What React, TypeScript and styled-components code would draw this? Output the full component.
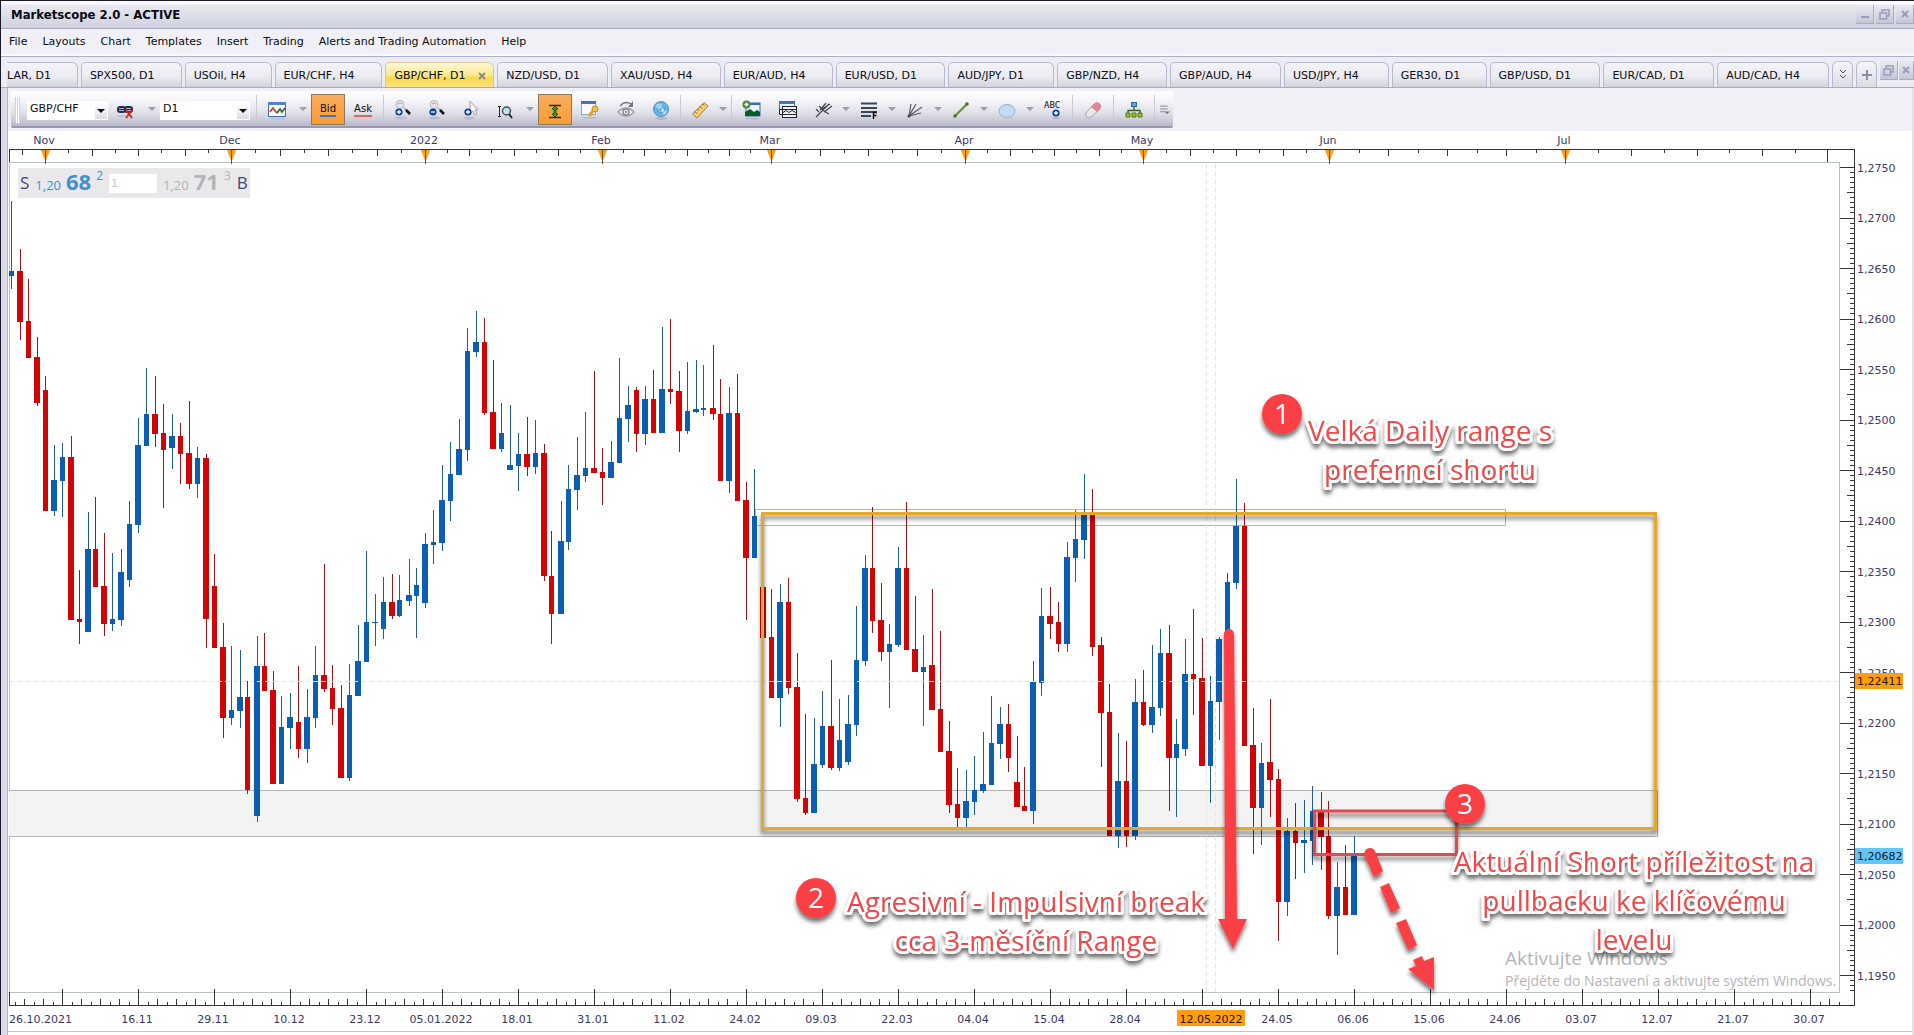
import React from "react";
import styled, { createGlobalStyle, css } from "styled-components";

const UI_FONT = '"DejaVu Sans", Verdana, sans-serif';
const NOTE_FONT = '"Open Sans", "Noto Sans", sans-serif';

const GlobalStyle = createGlobalStyle`
  *, *::before, *::after { box-sizing: border-box; }
  body { margin: 0; background: #efeff6; font: 11px/16px ${UI_FONT}; color: #0b0b12; }
  button, input, select { font: inherit; color: inherit; }
`;

/* ---------- window frame ---------- */

const Window = styled.div`
  min-height: 100vh;
  display: flex;
  flex-direction: column;
  background: #efeff6;
  border-top: 1px solid #1d1a2e;
  border-left: 1px solid #1d1a2e;
`;

const TitleBar = styled.header`
  display: flex;
  align-items: center;
  justify-content: space-between;
  height: 28px;
  padding-left: 10px;
  background: linear-gradient(#fbfbfe 0, #fbfbfe 3px, #e8e9f1 4px, #cfd1df 100%);
  border-bottom: 1px solid #a6a6bf;
`;

const Title = styled.h1`
  margin: 0;
  font: bold 13px/16px "DejaVu Sans Condensed", "DejaVu Sans", sans-serif;
  font-stretch: condensed;
`;

const FrameButtons = styled.div`
  display: flex;
  gap: 2px;
  align-items: flex-start;
`;

const FrameButton = styled.button<{ $w?: number }>`
  width: ${(p) => p.$w ?? 18}px;
  height: 19px;
  padding: 0;
  display: grid;
  place-items: center;
  border: 0;
  border-right: 1px solid #a9abc2;
  border-bottom: 1px solid #a9abc2;
  background: linear-gradient(#e9eaf3, #c5c7d8);
`;

const MenuBar = styled.nav`
  display: flex;
  gap: 15px;
  align-items: center;
  height: 28px;
  padding-left: 8px;
  padding-bottom: 2px;
  background: #f0f0f6;
  border-bottom: 1px solid #aeaec6;
  box-shadow: inset 0 -2px 0 #fafafd;
`;

const MenuItem = styled.button`
  padding: 0;
  border: 0;
  background: none;
  white-space: nowrap;
`;

/* ---------- tabs ---------- */

const TabStrip = styled.div`
  display: flex;
  align-items: flex-end;
  gap: 3px;
  height: 31px;
  padding-left: 6px;
  background: #ececf4;
  border-bottom: 1px solid #a9a9c4;
  overflow: hidden;
`;

const Tab = styled.div<{ $w: number; $active?: boolean; $first?: boolean }>`
  flex: 0 1 ${(p) => p.$w}px;
  min-width: 0;
  height: 25px;
  display: flex;
  align-items: center;
  justify-content: space-between;
  padding: 2px 6px 0 ${(p) => (p.$first ? 0 : 8)}px;
  border: 1px solid #b9b9cd;
  border-bottom: 0;
  border-left-width: ${(p) => (p.$first ? 0 : 1)}px;
  border-radius: ${(p) => (p.$first ? 0 : 5)}px 6px 0 0;
  background: linear-gradient(#f3f3f8 0, #ebebf2 55%, #d3d3df 100%);
  white-space: nowrap;
  ${(p) =>
    p.$active &&
    css`
      border-color: #d9c98b;
      background: linear-gradient(#fdf7d8 0, #fbe98f 50%, #f8d84c 62%, #fbe480 100%);
    `}
`;

const TabLabel = styled.button`
  padding: 0;
  border: 0;
  background: none;
`;

const TabClose = styled.button`
  width: 10px;
  height: 10px;
  padding: 0;
  border: 0;
  background: none;
  display: grid;
  place-items: center;
`;

const StripButton = styled.button`
  flex: 0 0 21px;
  height: 26px;
  padding: 0;
  display: grid;
  place-items: center;
  border: 1px solid #b9b9cd;
  border-bottom: 0;
  border-radius: 6px 6px 0 0;
  background: linear-gradient(#f5f5fa, #dcdce6);
`;

const StripFrame = styled(FrameButtons)`
  margin-left: auto;
  height: 26px;
  gap: 1px;
`;

/* ---------- toolbar ---------- */

const Body = styled.main`
  flex: 1;
  display: flex;
  flex-direction: column;
  padding-left: 6px;
  background: #dcdce8;
`;

const Sheet = styled.div`
  flex: 1;
  border-left: 1px solid #b6b6c8;
  border-right: 2px solid #e3e3ec;
  background: #ffffff;
`;

const ToolbarRow = styled.div`
  display: flex;
  height: 43px;
  padding: 3px 0 0 3px;
  background: #f0f0f6;
`;

const Toolbar = styled.div`
  display: flex;
  align-items: center;
  height: 37px;
  padding: 2px 0 0 4px;
  background: linear-gradient(#ffffff 0, #f6f6fa 25%, #dedee7 65%, #b9b9ca 100%);
  border-bottom: 2px solid #9797b0;
  border-radius: 2px;
`;

const Grip = styled.span`
  width: 5px;
  height: 26px;
  margin-right: 7px;
  background: repeating-linear-gradient(90deg, #d2d2de 0, #d2d2de 1px, #ffffff 1px, #ffffff 2px);
`;

const Field = styled.span<{ $w: number; $gap?: number }>`
  position: relative;
  width: ${(p) => p.$w}px;
  height: 19px;
  margin: 2px ${(p) => p.$gap ?? 0}px 0 0;
  display: flex;
`;

const Picker = styled.select`
  flex: 1;
  min-width: 0;
  padding: 0 14px 3px 3px;
  border: 0;
  border-radius: 0;
  appearance: none;
  background: #ffffff;
`;

const PickerArrow = styled.span`
  position: absolute;
  right: 1px;
  bottom: 1px;
  width: 12px;
  height: 15px;
  pointer-events: none;
  display: grid;
  place-items: center;
  background: linear-gradient(#ffffff, #dcdce6);
`;

const Tool = styled.button<{ $w?: number; $active?: boolean }>`
  width: ${(p) => p.$w ?? 34}px;
  height: 31px;
  padding: 0;
  display: flex;
  flex-direction: column;
  align-items: center;
  justify-content: center;
  border: 1px solid transparent;
  background: none;
  ${(p) =>
    p.$active &&
    css`
      border-color: #8a7a5c;
      background: linear-gradient(#f9ad5e, #fb9c35);
    `}
`;

const PriceWord = styled.span<{ $line: string }>`
  font-size: 10px;
  line-height: 13px;
  border-bottom: 2px solid ${(p) => p.$line};
`;

const Divider = styled.span`
  width: 1px;
  height: 29px;
  margin: 0 2px;
  background: #c9c9d6;
`;

/* ---------- chart ---------- */

const ChartArea = styled.section`
  position: relative;
  background: #ffffff;
  border-bottom: 1px solid #c4c4d2;
`;

const ChartSvg = styled.svg`
  display: block;
  width: 100%;
  height: auto;
`;

const Quote = styled.form`
  position: absolute;
  left: 10px;
  top: 37px;
  height: 30px;
  display: flex;
  align-items: center;
  gap: 6px;
  padding: 0 2px;
  background: #e9e9eb;
  font-family: ${NOTE_FONT};
`;

const Side = styled.button`
  padding: 0;
  border: 0;
  background: none;
  font: 17px/30px ${NOTE_FONT};
  color: #45457e;
`;

const Price = styled.span<{ $tone: string }>`
  display: flex;
  align-items: baseline;
  gap: 5px;
  color: ${(p) => p.$tone};
  font-size: 13px;
  line-height: 30px;
  b { font-size: 22px; font-weight: 700; }
  sup { font-size: 12px; line-height: 12px; align-self: flex-start; padding-top: 4px; }
`;

const Amount = styled.input`
  width: 48px;
  height: 19px;
  padding: 0 2px;
  border: 0;
  background: #ffffff;
  font: 11px/18px ${UI_FONT};
  color: #c4c4c4;
`;

/* ---------- data ---------- */

const MENU = ["File", "Layouts", "Chart", "Templates", "Insert", "Trading", "Alerts and Trading Automation", "Help"];

const TABS: [string, number][] = [
  ["LAR, D1", 71], ["SPX500, D1", 101], ["USOil, H4", 87], ["EUR/CHF, H4", 108], ["GBP/CHF, D1", 109],
  ["NZD/USD, D1", 111], ["XAU/USD, H4", 110], ["EUR/AUD, H4", 109], ["EUR/USD, D1", 110], ["AUD/JPY, D1", 106],
  ["GBP/NZD, H4", 110], ["GBP/AUD, H4", 111], ["USD/JPY, H4", 105], ["GER30, D1", 95], ["GBP/USD, D1", 111],
  ["EUR/CAD, D1", 111], ["AUD/CAD, H4", 112],
];

// direction, high, body top, body bottom, low
type Candle = [0 | 1, number, number, number, number];
const B = 1;
const R = 0;
const CANDLES: Candle[] = [
  [B,201,271,276,289],[R,249,271,322,340],[R,279,321,358,358],[R,337,357,403,406],[R,376,390,511,511],
  [B,445,480,511,516],[B,443,457,481,517],[R,436,457,620,620],[R,570,619,622,644],[B,512,549,632,632],
  [R,497,549,587,587],[R,533,586,624,636],[B,553,619,624,631],[B,549,572,620,626],[B,501,524,580,587],
  [B,418,445,525,533],[B,368,414,446,446],[R,376,414,434,447],[R,404,433,450,508],[B,414,436,448,469],
  [R,423,436,454,484],[R,401,453,484,489],[B,447,458,484,498],[R,454,458,619,648],[R,554,586,648,648],
  [R,623,647,718,738],[B,646,710,718,725],[B,650,697,711,728],[R,681,697,790,794],[B,636,666,816,822],
  [R,633,666,691,691],[R,671,690,784,784],[B,696,727,784,784],[B,693,717,728,749],[R,666,722,749,758],
  [B,689,717,749,763],[B,646,675,718,728],[R,564,675,689,692],[R,665,688,709,725],[R,685,708,778,778],
  [B,664,695,778,781],[B,625,661,696,696],[B,551,622,662,662],[B,594,622,623,646],[B,577,602,629,639],
  [R,574,602,616,619],[B,575,600,616,617],[B,559,595,601,606],[B,568,585,596,638],[B,533,544,603,608],
  [B,510,542,545,564],[B,465,500,543,551],[B,442,474,501,521],[B,419,449,475,475],[B,328,351,450,461],
  [B,311,342,352,357],[R,318,342,413,415],[R,360,412,449,449],[B,403,433,449,452],[B,405,465,470,470],
  [B,433,454,466,491],[R,417,454,467,476],[B,420,453,467,474],[R,444,453,576,581],[R,531,576,614,644],
  [B,501,541,614,614],[B,465,489,542,550],[B,437,475,490,510],[B,412,468,476,482],[R,371,468,473,473],
  [R,448,472,478,505],[B,441,462,478,478],[B,358,418,463,463],[B,386,405,419,442],[R,387,390,434,452],
  [B,386,399,434,445],[R,370,399,433,433],[B,327,389,433,433],[R,319,389,392,404],[R,371,391,431,452],
  [B,362,411,431,434],[B,360,409,412,413],[B,365,408,410,416],[R,345,408,414,420],[R,379,414,481,481],
  [B,387,413,481,493],[R,374,413,501,501],[R,482,500,558,620],[B,469,516,558,558],[R,587,587,638,638],
  [R,589,637,698,698],[B,584,602,698,727],[R,578,602,688,694],[R,653,687,799,802],[R,714,798,813,815],
  [B,718,764,813,813],[B,691,726,765,768],[R,660,726,768,770],[B,699,740,768,771],[B,695,724,762,765],
  [B,606,660,725,736],[B,555,568,661,666],[R,507,568,621,633],[R,583,620,652,661],[B,624,644,652,708],
  [B,547,568,645,647],[R,502,568,650,650],[R,596,649,672,672],[B,635,667,672,726],[R,589,665,710,710],
  [R,631,709,752,752],[R,721,751,805,813],[R,768,804,818,827],[B,770,801,818,827],[B,756,790,802,815],
  [B,732,784,791,793],[B,696,743,785,785],[B,707,724,744,759],[R,704,724,758,772],[R,736,782,807,807],
  [R,767,806,811,811],[B,661,682,811,824],[B,588,616,683,696],[R,587,616,624,639],[R,602,622,644,652],
  [B,542,557,644,652],[B,510,539,558,582],[B,474,514,540,559],[R,489,514,647,656],[R,637,645,713,767],
  [R,684,712,836,836],[B,733,781,836,848],[R,741,781,836,847],[B,679,702,836,840],[R,670,702,725,726],
  [B,645,707,725,733],[B,629,653,708,716],[R,625,653,758,811],[B,719,744,758,817],[B,639,674,749,756],
  [R,609,674,679,715],[R,638,678,766,766],[B,676,701,766,803],[B,637,639,702,740],[B,573,582,640,640],
  [B,479,526,583,589],[R,503,526,746,746],[R,708,745,808,854],[B,743,763,808,845],[R,699,762,780,817],
  [R,769,779,902,941],[B,818,831,902,916],[R,803,831,843,879],[B,800,840,843,873],[B,786,811,841,865],
  [R,792,811,837,870],[R,801,836,916,919],[B,862,887,916,955],[R,845,887,915,915],[B,836,855,915,915],
];

const MONTHS: [string, number][] = [
  ["Nov", 45], ["Dec", 231], ["2022", 425], ["Feb", 602], ["Mar", 771], ["Apr", 965], ["May", 1143], ["Jun", 1329], ["Jul", 1565],
];
const MONTH_END = 1828;

const DATES = [
  "16.11", "29.11", "10.12", "23.12", "05.01.2022", "18.01", "31.01", "11.02", "24.02", "09.03", "22.03", "04.04",
  "15.04", "28.04", "12.05.2022", "24.05", "06.06", "15.06", "24.06", "03.07", "12.07", "21.07", "30.07",
];
const DATE_STEP = 76;
const FIRST_DATE = 62;

const PRICES = Array.from({ length: 17 }, (_, k) => "1," + String(2750 - k * 50));
const priceY = (k: number) => 167.5 + k * 50.5;

/* ---------- chart parts ---------- */

const INK = "#3a3868";

function Candles() {
  return (
    <g shapeRendering="crispEdges">
      {CANDLES.map(([up, high, top, bottom, low], i) => {
        const odd = i % 2;
        const x = Math.round(9 + i * 8.445 - odd * 0.4);
        return (
          <React.Fragment key={i}>
            <rect x={x + 2 + odd} y={high} width={1} height={Math.max(1, low - high)} fill={up ? "#1f5f8f" : "#a01418"} />
            <rect x={x} y={top} width={5 + odd} height={Math.max(1, bottom - top)} fill={up ? "#0a5fb4" : "#d10505"} />
          </React.Fragment>
        );
      })}
    </g>
  );
}

function TopAxis() {
  const stops = [...MONTHS.map((m) => m[1]), MONTH_END];
  const ticks: [number, number][] = [[22, 155]];
  stops.slice(0, -1).forEach((from, k) => {
    const step = (stops[k + 1] - from) / 8;
    for (let n = 1; n < 8; n++) ticks.push([Math.round(from + step * n), n % 2 ? 153 : 156]);
  });
  return (
    <g>
      <g stroke="#33333b" shapeRendering="crispEdges">
        <path d="M9.5 162V149.5H1854.5V1005.5" fill="none" />
        {ticks.map(([x, y]) => <path key={x} d={`M${x + 0.5} 149V${y}`} />)}
        <path d={`M${MONTH_END - 0.5} 149V162`} />
      </g>
      {MONTHS.map(([label, x]) => (
        <g key={label}>
          <path d={`M${x - 4} 150H${x + 5}L${x + 0.5} 162Z`} fill="#f9a01b" />
          <path d={`M${x + 0.5} 149V164`} stroke="#7a4d12" shapeRendering="crispEdges" />
          <text x={x - 1} y={144} textAnchor="middle">{label}</text>
        </g>
      ))}
    </g>
  );
}

function DateAxis() {
  const ticks: React.ReactNode[] = [];
  for (let k = -5; k <= 187; k++) {
    const x = Math.round(FIRST_DATE + k * 9.5) + 0.5;
    if (x > 1852) break;
    const top = k % 8 === 0 ? 989 : k % 2 === 0 ? 999 : 1002;
    ticks.push(<path key={k} d={`M${x} ${top}V1006`} />);
  }
  return (
    <g>
      <g stroke="#33333b" shapeRendering="crispEdges">
        <path d="M9.5 992V1005.5H1854" fill="none" />
        {ticks}
      </g>
      <text x={9} y={1023}>26.10.2021</text>
      {DATES.map((label, k) => {
        const x = FIRST_DATE + DATE_STEP * (k + 1) - 1;
        const current = label === "12.05.2022";
        return (
          <g key={label}>
            {current && <rect x={1177} y={1010} width={68} height={16} fill="#ff9d0f" />}
            <text x={current ? 1211 : x} y={1023} textAnchor="middle" fill={current ? "#1d1408" : undefined}>{label}</text>
          </g>
        );
      })}
    </g>
  );
}

function PriceAxis() {
  const minor: React.ReactNode[] = [];
  for (let n = 1; n < 164; n++) {
    const y = Math.round(167.5 + n * 5.05 - 0.5) + 0.5;
    if (n % 10) minor.push(<path key={n} d={`M${n % 5 ? 1850 : 1847} ${y}H1854`} />);
  }
  return (
    <g>
      <g stroke="#33333b" shapeRendering="crispEdges">
        {minor}
        {PRICES.map((p, k) => <path key={p} d={`M1840 ${Math.floor(priceY(k)) + 0.5}H1854`} />)}
      </g>
      {PRICES.map((p, k) => <text key={p} x={1857} y={Math.round(priceY(k)) + 4}>{p}</text>)}
      <rect x={1855} y={673} width={48} height={16} fill="#ff9d0f" />
      <text x={1857} y={685} fill="#1d1408">1,22411</text>
      <rect x={1855} y={848} width={48} height={16} fill="#62c6f8" />
      <text x={1857} y={860} fill="#101828">1,20682</text>
    </g>
  );
}

function Badge({ x, y, n }: { x: number; y: number; n: number }) {
  return (
    <g filter="url(#drop)">
      <circle cx={x} cy={y} r={20} fill="#fb4144" />
      <text x={x} y={y + 10} textAnchor="middle" fontSize={28} fontFamily={NOTE_FONT} fontWeight={500} fill="#ffffff">{n}</text>
    </g>
  );
}

function Note({ x, y, lines }: { x: number; y: number; lines: string[] }) {
  return (
    <g filter="url(#drop)" fontFamily={NOTE_FONT} fontSize={28} textAnchor="middle" fill="#f04648" stroke="#ffffff" strokeWidth={6} strokeLinejoin="round" paintOrder="stroke">
      {lines.map((line, k) => <text key={line} x={x} y={y + k * 39}>{line}</text>)}
    </g>
  );
}

function Chart() {
  return (
    <ChartSvg viewBox="8 131 1904 900" role="img" aria-label="GBP/CHF daily chart" fontFamily={UI_FONT} fontSize={11} fill={INK}>
      <defs>
        <filter id="drop" x="-20%" y="-20%" width="140%" height="150%">
          <feDropShadow dx="0" dy="4" stdDeviation="2" floodColor="#000000" floodOpacity="0.55" />
        </filter>
      </defs>
      <rect x={9.5} y={162.5} width={1830} height={830} fill="none" stroke="#b9c1c6" shapeRendering="crispEdges" />
      <rect x={9} y={790.5} width={1648.5} height={46} fill="#f3f3f3" />
      <g fill="none" stroke="#b3b3b5" shapeRendering="crispEdges">
        <path d="M9 790.5H1657.5V836.5H9" />
        <rect x={755.5} y={509.5} width={750} height={16} />
      </g>
      <TopAxis />
      <PriceAxis />
      <DateAxis />
      <Candles />
      <g fill="none" stroke="#e2e2e2" strokeDasharray="5 3" shapeRendering="crispEdges">
        <path d="M9 681.5H1839" />
        <path d="M1206.5 164V992M1215.5 164V992" />
      </g>

      <rect x={762.5} y={513.5} width={893} height={315} fill="none" stroke="#e5a92b" strokeWidth={3} filter="url(#drop)" />

      <g filter="url(#drop)" fill="none" stroke="#e34a4d" strokeWidth={3}>
        <rect x={1314.5} y={811} width={142} height={43.5} />
      </g>
      <g filter="url(#drop)" fill="#fb4144" stroke="none">
        <path d="M1224 634a5 5 0 0 1 10 0L1237 919H1247L1233 949L1218 919H1225Z" />
        <path d="M1365 856a5.500 5.500 0 0 1 10 -5L1383 871L1374 877Z" />
        <path d="M1380 887L1389 883L1400 908L1391 913Z" />
        <path d="M1396 923L1406 919L1417 945L1408 950Z" />
        <path d="M1413 960L1422 956L1424 961L1434 957V990L1408 969L1416 966Z" />
      </g>

      <g fill="#b4b4b6" fontFamily={NOTE_FONT}>
        <text x={1505} y={965} fontSize={19}>Aktivujte Windows</text>
        <text x={1505} y={986} fontSize={14}>Přejděte do Nastavení a aktivujte systém Windows.</text>
      </g>

      <Note x={1430} y={441} lines={["Velká Daily range s", "preferncí shortu"]} />
      <Note x={1026} y={912} lines={["Agresivní - Impulsivní break", "cca 3-měsíční Range"]} />
      <Note x={1634} y={872} lines={["Aktuální Short příležitost na", "pullbacku ke klíčovému", "levelu"]} />
      <Badge x={1282} y={414} n={1} />
      <Badge x={816} y={898} n={2} />
      <Badge x={1465} y={804} n={3} />
    </ChartSvg>
  );
}

/* ---------- icons ---------- */

const Icon = ({ children, size = 20 }: { children: React.ReactNode; size?: number }) => (
  <svg width={size} height={size} viewBox="0 0 20 20" fill="none" aria-hidden="true">{children}</svg>
);

const Caret = ({ color = "#9c9cab" }: { color?: string }) => (
  <svg width="8" height="5" viewBox="0 0 8 5" aria-hidden="true"><path d="M0 0H8L4 4Z" fill={color} /></svg>
);

const Plus = ({ x, y, minus }: { x: number; y: number; minus?: boolean }) => (
  <g>
    <circle cx={x} cy={y} r={3.6} fill="#11408f" />
    <path d={minus ? `M${x - 2} ${y}h4` : `M${x - 2} ${y}h4M${x} ${y - 2}v4`} stroke="#fff" strokeWidth={1.3} />
  </g>
);

const Zoomer = ({ minus }: { minus?: boolean }) => (
  <Icon>
    <circle cx={7} cy={4.500} r={4} fill="#e6e6eb" stroke="#b4b4be" />
    <path d="M5 4q2-2 4 0" stroke="#a2a2ae" />
    <path d="M11 8L14 10.500" stroke="#9a9aa5" strokeWidth={1.500} />
    <path d="M13 10L17 14" stroke="#15151b" strokeWidth={2.600} />
    <Plus x={6} y={12} minus={minus} />
    <ellipse cx={8} cy={18} rx={6} ry={1.500} fill="#9fa3bd" opacity={0.5} />
  </Icon>
);

const icons = {
  binoculars: (
    <Icon>
      <rect x={1} y={6} width={9} height={7} rx={3} fill="#262a4c" />
      <rect x={8} y={6} width={9} height={7} rx={3} fill="#262a4c" />
      <path d="M3 8.500h5M10 8.500h5M3 10.500h5M10 10.500h5" stroke="#a9b3d6" />
      <path d="M10 10L16 18M16 10L10 18" stroke="#d12a18" strokeWidth={2} />
      <path d="M2 16h7" stroke="#aab0cb" strokeWidth={2} opacity={0.5} />
    </Icon>
  ),
  chart: (
    <Icon>
      <rect x={1.500} y={2.500} width={17} height={14} fill="#fff" stroke="#3f6db0" />
      <path d="M1 3.500H19" stroke="#4b83cf" strokeWidth={3} />
      <path d="M3 12L6 8L9 12L11 13" stroke="#c9452a" strokeWidth={1.800} />
      <path d="M10 13L13 9L15 12L18 8" stroke="#2d6b35" strokeWidth={1.800} />
      <path d="M3 18.500h14" stroke="#aab0cb" strokeWidth={2} opacity={0.6} />
    </Icon>
  ),
  cursor: (
    <Icon>
      <path d="M9 1V14L12 11L14 15L16 14L14 10H17Z" fill="#f6f6fa" stroke="#a2a2b0" />
      <Plus x={7} y={12} />
      <ellipse cx={8} cy={18} rx={6} ry={1.500} fill="#9fa3bd" opacity={0.5} />
    </Icon>
  ),
  area: (
    <Icon>
      <path d="M4.500 6V17M3 6.500H6M3 16.500H6" stroke="#26262e" />
      <circle cx={11.500} cy={11} r={4} fill="#bfe3ee" stroke="#4a4a55" strokeWidth={1.400} />
      <path d="M14 14L17 18" stroke="#26262e" strokeWidth={2} />
    </Icon>
  ),
  scale: (
    <Icon>
      <path d="M4 5.500H16M4 17.500H16" stroke="#2b2b1c" strokeWidth={1.400} />
      <path d="M10 6L13 9H11V14H13L10 17L7 14H9V9H7Z" fill="#3d9c2c" stroke="#1f5517" />
    </Icon>
  ),
  settings: (
    <Icon>
      <rect x={1.500} y={1.500} width={14} height={13} fill="#f7f9fd" stroke="#8fa6cc" />
      <path d="M1 2.500H16" stroke="#3d74c8" strokeWidth={3} />
      <circle cx={15} cy={9} r={3} fill="#f0c04a" stroke="#c98f1d" />
      <path d="M13 11L9 16" stroke="#dda42a" strokeWidth={3} />
      <path d="M3 18h13" stroke="#aab0cb" strokeWidth={2} opacity={0.6} />
    </Icon>
  ),
  eye: (
    <Icon>
      <path d="M2 12Q10 4 18 12Q10 20 2 12Z" stroke="#9d9da5" strokeWidth={1.500} fill="#ededf1" />
      <circle cx={10} cy={12} r={3} stroke="#8b8b94" strokeWidth={1.500} />
      <circle cx={10} cy={12} r={1} fill="#77777f" />
      <path d="M4 6Q9 0 15 4" stroke="#77777f" strokeWidth={1.400} />
      <path d="M17 1V7H12Z" fill="#77777f" />
    </Icon>
  ),
  globe: (
    <Icon>
      <ellipse cx={10} cy={18.500} rx={6} ry={1.500} fill="#8ea4c8" opacity={0.5} />
      <circle cx={10} cy={9} r={7.500} fill="#68b7e4" stroke="#4a8fc3" />
      <path d="M5 6Q8 2 12 5L9 8L6 9ZM11 8L16 12L13 15L10 11Z" fill="#bfe2f5" />
      <circle cx={10} cy={9} r={4} stroke="#3f86bd" opacity={0.5} />
    </Icon>
  ),
  ruler: (
    <Icon>
      <path d="M2.500 14L14 2.500L18 6L7 18Z" fill="#f8cf7c" stroke="#b07a24" />
      <path d="M5 11.500L7 13.500M7.500 9L9 10.500M10 6.500L12 8.500M12.500 4L14 5.500" stroke="#6b4714" />
    </Icon>
  ),
  picture: (
    <Icon>
      <rect x={4} y={3} width={14} height={13} fill="#eaf3ff" stroke="#3a6aa8" />
      <path d="M4 4H18" stroke="#3a6fbc" strokeWidth={2} />
      <path d="M3 16V12L8 9L12 12L15 10L18 12V16Z" fill="#0e5a26" />
      <circle cx={4.500} cy={4.500} r={4} fill="#4e8d2a" />
      <path d="M2.500 4.500h4M4.500 2.500v4" stroke="#fff" strokeWidth={1.400} />
      <path d="M4 18.500h13" stroke="#aab0cb" strokeWidth={2} opacity={0.6} />
    </Icon>
  ),
  windows: (
    <Icon>
      <rect x={1.500} y={1.500} width={15} height={13} fill="#eef3fa" stroke="#4774b5" />
      <path d="M1 2.500H17" stroke="#3d74c8" strokeWidth={3} />
      <rect x={4.500} y={6.500} width={14} height={11} fill="#f7f7fa" stroke="#23232b" />
      <path d="M1.500 14.500V9.500H19M5 12.500L8 10.500L11 12.500L14 10.500L18 12.500M2 14.500H18" stroke="#23232b" />
    </Icon>
  ),
  pitchfork: (
    <Icon>
      <path d="M3 17L13 7M13 7L16 4M6 6L11 11L16 14M6 12L3 9M7 10L13 3M11 12L19 6M9 9L17 4" stroke="#44444d" strokeWidth={1.200} />
    </Icon>
  ),
  levels: (
    <Icon>
      <path d="M2 3.500H18M2 8H18M2 12H18M2 16H12" stroke="#3a4652" strokeWidth={2} />
      <path d="M14.500 19V12.500H18M14.500 15.500H17.500" stroke="#111" strokeWidth={1.500} />
    </Icon>
  ),
  fan: (
    <Icon>
      <path d="M4 16L6 4M4 16L11 4M4 16L17 7M4 16L16 13" stroke="#5b5b66" strokeWidth={1.200} />
      <circle cx={4} cy={16} r={1.500} fill="#44444d" />
    </Icon>
  ),
  line: (
    <Icon>
      <path d="M4 16L16 4" stroke="#6c9a26" strokeWidth={2.400} />
      <circle cx={4} cy={16} r={1.800} fill="#55701f" />
      <circle cx={16} cy={4} r={1.800} fill="#55701f" />
    </Icon>
  ),
  ellipse: (
    <Icon><ellipse cx={10} cy={11} rx={8} ry={6.500} fill="#c4dcf3" stroke="#8fb2da" /></Icon>
  ),
  pill: (
    <Icon>
      <path d="M3 13L11 4Q14 1 17 4Q19 7 16 10L8 17Q4 18 3 16Z" fill="#e9e9ee" stroke="#a5a5b0" />
      <path d="M8 7L11 4Q14 1 17 4Q19 7 16 10L14 12Z" fill="#e58493" />
    </Icon>
  ),
  tree: (
    <Icon>
      <path d="M10 6V11M4 14V10.500H16V14" stroke="#3c5a12" strokeWidth={1.300} />
      <rect x={7.500} y={2.500} width={5} height={4} fill="#5aa7e8" stroke="#2a67a8" />
      <path d="M2 13h4v4h-4zM8 13h4v4h-4zM14 13h4v4h-4z" fill="#9ac52a" stroke="#4f7a12" />
    </Icon>
  ),
  abc: (
    <Icon>
      <text x={1} y={8} fontSize={9} fontFamily={'"DejaVu Sans Mono", monospace'} fill="#111">ABC</text>
      <Plus x={13} y={13} />
      <path d="M10 18h6" stroke="#8e93bb" />
    </Icon>
  ),
  more: (
    <Icon size={14}>
      <path d="M3 4.500H14M3 8.500H14M3 12.500H10" stroke="#777787" strokeWidth={1.200} />
      <path d="M9 12H17L13 16Z" fill="#777787" />
    </Icon>
  ),
};

const Drop = ({ w = 12, label }: { w?: number; label: string }) => (
  <Tool $w={w} aria-label={label}><Caret /></Tool>
);

const Restore = () => (
  <svg width="11" height="11" viewBox="0 0 11 11" fill="none" stroke="#9a9cb8" strokeWidth="1.500" aria-hidden="true">
    <path d="M3 3V1H10V7H8M1 4H7.500V10H1Z" />
  </svg>
);
const Cross = ({ color = "#9a9cb8" }: { color?: string }) => (
  <svg width="8" height="8" viewBox="0 0 8 8" stroke={color} strokeWidth="2" aria-hidden="true"><path d="M1 1L7 7M7 1L1 7" /></svg>
);

/* ---------- app ---------- */

export default function App() {
  return (
    <>
      <GlobalStyle />
      <Window>
        <TitleBar>
          <Title>Marketscope 2.0 - ACTIVE</Title>
          <FrameButtons>
            <FrameButton aria-label="Minimize">
              <svg width="10" height="10" viewBox="0 0 10 10" aria-hidden="true"><path d="M1 8H9" stroke="#9a9cb8" strokeWidth="2" /></svg>
            </FrameButton>
            <FrameButton aria-label="Restore"><Restore /></FrameButton>
            <FrameButton aria-label="Close"><Cross /></FrameButton>
          </FrameButtons>
        </TitleBar>
        <MenuBar>{MENU.map((m) => <MenuItem key={m}>{m}</MenuItem>)}</MenuBar>
        <TabStrip>
          {TABS.map(([label, w], i) => (
            <Tab key={label} $w={w} $active={i === 4} $first={i === 0}>
              <TabLabel>{label}</TabLabel>
              {i === 4 && <TabClose aria-label="Close tab"><Cross color="#8d8a86" /></TabClose>}
            </Tab>
          ))}
          <StripButton aria-label="More tabs">
            <svg width="8" height="11" viewBox="0 0 8 11" fill="none" stroke="#55556b" aria-hidden="true"><path d="M1 1L4 4L7 1M1 6L4 9L7 6" /></svg>
          </StripButton>
          <StripButton aria-label="New tab">
            <svg width="12" height="12" viewBox="0 0 12 12" stroke="#8c8ca6" strokeWidth="2" aria-hidden="true"><path d="M1 6H11M6 1V11" /></svg>
          </StripButton>
          <StripFrame>
            <FrameButton aria-label="Restore chart"><Restore /></FrameButton>
            <FrameButton $w={15} aria-label="Close chart"><Cross /></FrameButton>
          </StripFrame>
        </TabStrip>

        <Body>
          <Sheet>
            <ToolbarRow>
              <Toolbar role="toolbar">
                <Grip />
                <Field $w={81}>
                  <Picker aria-label="Symbol"><option>GBP/CHF</option></Picker>
                  <PickerArrow><Caret color="#111" /></PickerArrow>
                </Field>
                <Tool $w={36} aria-label="Link">{icons.binoculars}</Tool>
                <Drop w={16} label="Link options" />
                <Field $w={90} $gap={4}>
                  <Picker aria-label="Period"><option>D1</option></Picker>
                  <PickerArrow><Caret color="#111" /></PickerArrow>
                </Field>
                <Divider />
                <Tool $w={36} aria-label="Chart type">{icons.chart}</Tool>
                <Drop w={16} label="Chart type options" />
                <Tool $active><PriceWord $line="#3d76c4">Bid</PriceWord></Tool>
                <Tool $w={36}><PriceWord $line="#e2664e">Ask</PriceWord></Tool>
                <Divider />
                <Tool aria-label="Zoom in"><Zoomer /></Tool>
                <Tool aria-label="Zoom out"><Zoomer minus /></Tool>
                <Tool aria-label="Crosshair">{icons.cursor}</Tool>
                <Tool aria-label="Zoom area">{icons.area}</Tool>
                <Drop w={16} label="Zoom options" />
                <Tool $active aria-label="Auto scale">{icons.scale}</Tool>
                <Tool $w={36} aria-label="Properties">{icons.settings}</Tool>
                <Tool $w={36} aria-label="Visibility">{icons.eye}</Tool>
                <Tool aria-label="Web">{icons.globe}</Tool>
                <Divider />
                <Tool aria-label="Ruler">{icons.ruler}</Tool>
                <Drop label="Ruler options" />
                <Divider />
                <Tool $w={36} aria-label="Add picture">{icons.picture}</Tool>
                <Tool $w={36} aria-label="Windows">{icons.windows}</Tool>
                <Tool aria-label="Pitchfork">{icons.pitchfork}</Tool>
                <Drop label="Pitchfork options" />
                <Tool aria-label="Levels">{icons.levels}</Tool>
                <Drop label="Level options" />
                <Tool aria-label="Fan">{icons.fan}</Tool>
                <Drop label="Fan options" />
                <Tool aria-label="Line">{icons.line}</Tool>
                <Drop label="Line options" />
                <Tool aria-label="Ellipse">{icons.ellipse}</Tool>
                <Drop label="Ellipse options" />
                <Tool aria-label="Text">{icons.abc}</Tool>
                <Divider />
                <Tool $w={36} aria-label="Eraser">{icons.pill}</Tool>
                <Divider />
                <Tool $w={36} aria-label="Object tree">{icons.tree}</Tool>
                <Divider />
                <Tool $w={16} aria-label="More tools">{icons.more}</Tool>
              </Toolbar>
            </ToolbarRow>
            <ChartArea>
              <Chart />
              <Quote>
                <Side type="button">S</Side>
                <Price $tone="#4190d2">1,20 <b>68</b> <sup>2</sup></Price>
                <Amount aria-label="Amount" defaultValue="1" />
                <Price $tone="#b4b4b6">1,20 <b>71</b> <sup>3</sup></Price>
                <Side type="button">B</Side>
              </Quote>
            </ChartArea>
          </Sheet>
        </Body>
      </Window>
    </>
  );
}
